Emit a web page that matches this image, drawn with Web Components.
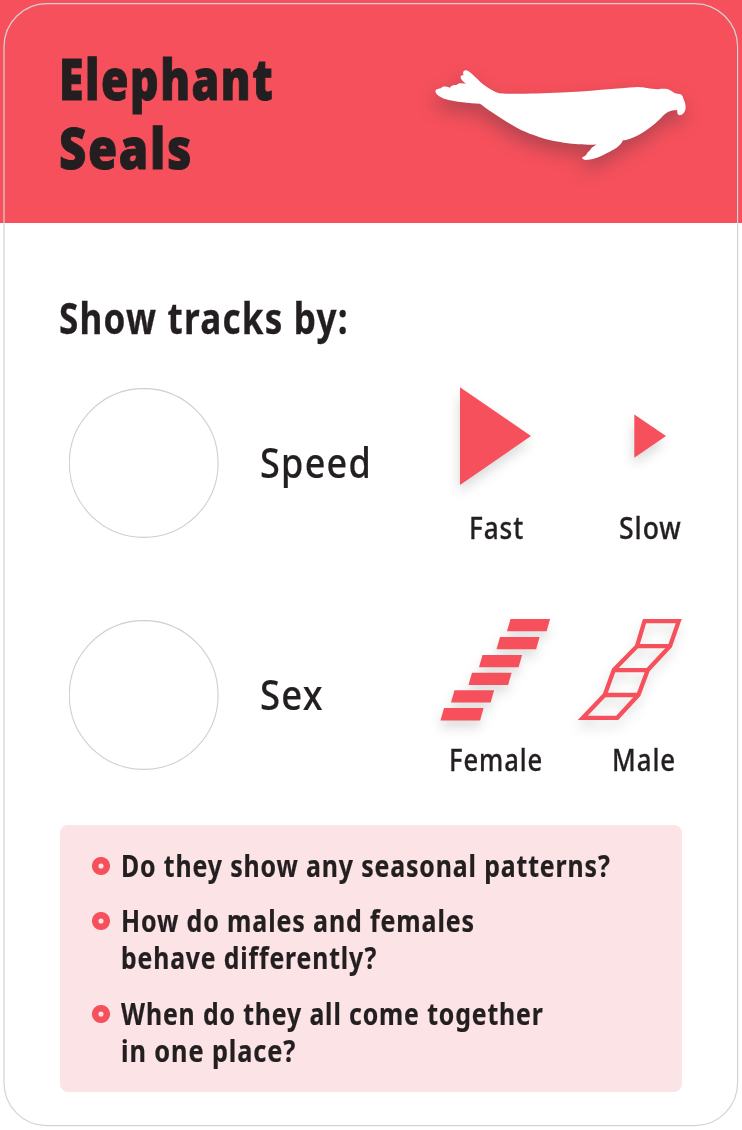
<!DOCTYPE html>
<html lang="en">
<head>
<meta charset="utf-8">
<title>Elephant Seals</title>
<style>
html,body{margin:0;padding:0;background:#fff}
body{font-family:"Noto Sans","Open Sans",sans-serif;color:#231f20}
</style>
</head>
<body>
<info-card>
  <card-header slot="header">
    <fit-line w="214" size="57" lh="69" weight="900" bold="1">Elephant</fit-line>
    <fit-line w="132" size="57" lh="69" weight="900" bold="1">Seals</fit-line>
  </card-header>
  <fit-line class="heading" slot="heading" w="289" size="43" lh="50" weight="700" bold=".3">Show tracks by:</fit-line>
  <option-row>
    <fit-line slot="label" w="111" size="42" lh="50" weight="500" bold=".2">Speed</fit-line>
    <legend-item kind="fast"><fit-line w="54" size="30" lh="37" weight="500" bold=".3">Fast</fit-line></legend-item>
    <legend-item kind="slow"><fit-line w="62" size="30" lh="37" weight="500" bold=".3">Slow</fit-line></legend-item>
  </option-row>
  <option-row>
    <fit-line slot="label" w="63" size="42" lh="50" weight="500" bold=".2">Sex</fit-line>
    <legend-item kind="female"><fit-line w="93" size="30" lh="37" weight="500" bold=".3">Female</fit-line></legend-item>
    <legend-item kind="male"><fit-line w="63" size="30" lh="37" weight="500" bold=".3">Male</fit-line></legend-item>
  </option-row>
  <question-panel slot="panel">
    <question-item><fit-line w="489" size="30" lh="37" weight="700" bold=".2">Do they show any seasonal patterns?</fit-line></question-item>
    <question-item><fit-line w="353" size="30" lh="37" weight="700" bold=".2">How do males and females</fit-line><fit-line w="255" size="30" lh="37" weight="700" bold=".2">behave differently?</fit-line></question-item>
    <question-item><fit-line w="422" size="30" lh="37" weight="700" bold=".2">When do they all come together</fit-line><fit-line w="174" size="30" lh="37" weight="700" bold=".2">in one place?</fit-line></question-item>
  </question-panel>
</info-card>
<script>
const define = (name, html, setup) => customElements.define(name, class extends HTMLElement {
  connectedCallback() {
    if (this.shadowRoot) return;
    const t = document.createElement('template');
    t.innerHTML = typeof html === 'function' ? html(this) : html;
    this.attachShadow({mode: 'open'}).append(t.content.cloneNode(true));
    if (setup) setup(this);
  }
});

define('info-card', `<style>
:host{display:block;position:relative;width:742px;height:1130px;background:#fff;overflow:hidden}
.heading{padding:70px 0 0 59px;height:50px}
.options{padding:45px 0 0 69px;display:grid;row-gap:74px}
.panel{padding:47px 60px 0}
.outline{position:absolute;left:3px;top:3px;pointer-events:none}
</style>
<slot name="header"></slot>
<div class="heading"><slot name="heading"></slot></div>
<div class="options"><slot></slot></div>
<div class="panel"><slot name="panel"></slot></div>
<svg class="outline" width="736" height="1125"><rect x="1" y=".7" width="733.6" height="1122" rx="43" fill="none" stroke="#d3d3d4" stroke-width="1.2"/></svg>`);

define('card-header', `<style>
:host{display:flex;justify-content:space-between;box-sizing:border-box;height:223px;padding:44px 37px 0 59px;background:#f5505b}
svg{display:block;overflow:visible;margin-top:6px;filter:drop-shadow(-2px 9px 9px rgba(70,50,60,.38))}
</style>
<div><slot></slot></div>
<svg width="280" height="130" viewBox="425 50 280 130"><path fill="#fff" d="M435.5 90.8C436 88.5 439.5 88.8 440.8 88.2C442.5 86 446 86.2 450 87.8C451 85.8 454 84.6 456 85.3C458 83 461 82.8 466 83.8C463 81.6 460 78.5 460.7 76.3C461.2 75 463 75.3 463.7 75.2C462.3 72.5 463.3 70 466.5 70.2C469 70.6 475 76.5 482 83.6C488 88 494 91.8 499 93.2C512 94.5 535 93.5 562 92.5C586 91.8 618 88 638 87C645 87.2 649 88.8 658 89.3C663 88.4 668 88.8 670 90.2C672 91 674 93 676 93.4C679 94 681 93.4 682.5 96C684 101 686 103 685.5 109C684.5 112.5 683 115 679.5 115.2C676.5 114.5 678 111.8 676.8 110C670 110 665 113 661.5 117.5C653 126 641 135 629.5 139C626.5 140 625 140.2 623 140.2C621 146 613 150 607 153C601 156.5 594 159 588.5 159.8C584 160.5 581.8 158.8 582.3 157.2C585 156.5 587 154.5 587.5 152.5C589 151.5 591 149.5 591.7 147.8L596.5 144.4C583 145.3 567 143.5 557 141.5C546 139.7 532 135 521 130C509 124 495 114.3 485 107.6C484 106.5 482 105 480 103.8C469 103.2 456 102 446 99.3C439 97.3 435 93.5 435.5 90.8Z"/></svg>`);

/* A single line of text, condensed or stretched to the width in its "w" attribute. */
define('fit-line', el => `<style>
:host{display:block;width:${el.getAttribute('w')}px;height:${el.getAttribute('lh')}px;font-size:${el.getAttribute('size')}px;line-height:${el.getAttribute('lh')}px;font-weight:${el.getAttribute('weight')};-webkit-text-stroke:${el.getAttribute('bold')}px currentColor}
span{display:inline-block;white-space:nowrap;transform-origin:0 50%;letter-spacing:.035em}
</style><span><slot></slot></span>`, el => {
  const span = el.shadowRoot.querySelector('span');
  const fit = () => {
    span.style.transform = 'none';
    const n = span.offsetWidth - .035 * el.getAttribute('size');
    if (n > 0) span.style.transform = `scaleX(${el.getAttribute('w') / n})`;
  };
  fit();
  new ResizeObserver(fit).observe(span);
});

define('option-row', `<style>
:host{display:grid;grid-template-columns:150px 169px 140px 140px;height:158px}
.ring{display:block}
.label{box-sizing:border-box;height:150px;padding:0 0 2px 41px;display:flex;align-items:center}
</style>
<svg class="ring" width="150" height="150"><circle cx="74.7" cy="75" r="74.4" fill="none" stroke="#cfcfd0" stroke-width="1.1"/></svg>
<div class="label"><slot name="label"></slot></div>
<slot></slot>`);

/* Each mark is drawn in a cell of 140 by 121, followed by its caption. */
const bar = (x, y) => `<path d="M${x + 3.5} ${y}h39.6l-3.5 12.3h-39.6z"/>`;
const marks = {
  fast: ['<path d="M72 -.8V97L143 48z"/>', 81],
  slow: ['<path d="M106.3 26.5V69.8L138 48z"/>', 91],
  female: [bar(119, -1) + bar(108.5, 17) + bar(91, 34.9) + bar(80.5, 52.7) + bar(63, 70.3) + bar(52.5, 88.1), 61],
  male: ['<g fill="none" stroke="#f5505b" stroke-width="4.3"><path d="M116.5 1.2H150.7L142 26.2L119.8 50L110.5 74.8L89.3 97.8H54.8L76.8 74.8L85.8 50L109 26.2Z"/><path d="M109 26.2H142.2M86 50.2H119.8M76.5 75H110.5"/></g>', 84]
};
define('legend-item', el => {
  const [mark, left] = marks[el.getAttribute('kind')];
  return `<style>
:host{display:block}
svg{display:block;overflow:visible;filter:drop-shadow(-1px 7px 6px rgba(0,0,0,.14))}
.caption{padding-left:${left}px}
</style><svg width="140" height="121" fill="#f5505b">${mark}</svg><div class="caption"><slot></slot></div>`;
});

define('question-panel', `<style>
:host{display:flex;flex-direction:column;gap:18.4px;box-sizing:border-box;width:622px;height:267px;padding:22px 32px;border-radius:8px;background:#fce4e6}
</style><slot></slot>`);

define('question-item', `<style>
:host{display:flex;gap:10.8px}
svg{flex:none;margin-top:10px}
</style><svg width="18" height="18"><circle cx="9" cy="9" r="5.8" fill="#fce4e6" stroke="#f5505b" stroke-width="6.5"/></svg><div><slot></slot></div>`);
</script>
</body>
</html>
